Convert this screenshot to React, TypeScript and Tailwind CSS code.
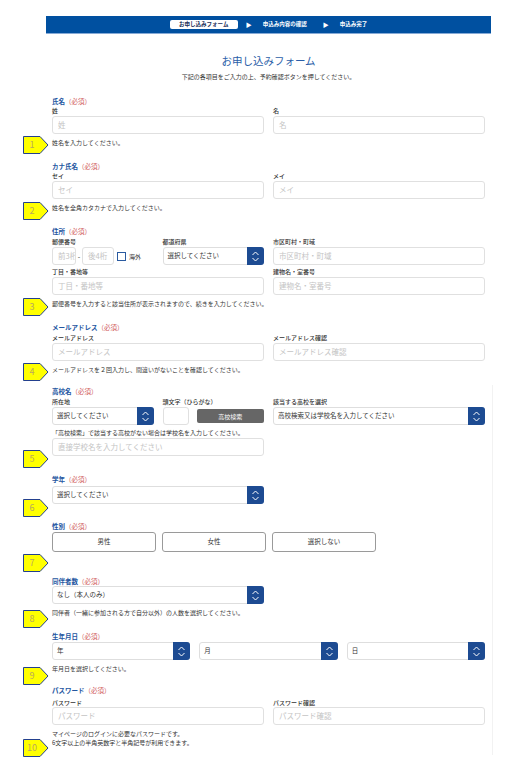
import React from 'react';

// 上下矢印のボタン付きセレクト
const SelectBox = ({ value, className = '' }: { value: string; className?: string }) => (
  <div className={`flex h-[18px] items-stretch rounded-[3px] border border-[#dedede] bg-white ${className}`}>
    <div className="flex flex-1 items-center whitespace-nowrap pl-[4px] text-[6.5px] text-[#333]">{value}</div>
    <div className="flex w-[17px] items-center justify-center rounded-r-[3px] bg-[#1d4b92] -m-px">
      <svg width="9" height="13" viewBox="0 0 9 13" fill="none" stroke="#fff" strokeWidth="1">
        <path d="M1.5 5 L4.5 2 L7.5 5" />
        <path d="M1.5 8 L4.5 11 L7.5 8" />
      </svg>
    </div>
  </div>
);

const TextBox = ({ placeholder, className = '' }: { placeholder: string; className?: string }) => (
  <div
    className={`flex h-[18px] items-center overflow-hidden whitespace-nowrap rounded-[3px] border border-[#e0e0e0] bg-white pl-[5px] text-[7.5px] text-[#c4c4c4] ${className}`}
  >
    {placeholder}
  </div>
);

const Sub = ({ children, className = '' }: { children: React.ReactNode; className?: string }) => (
  <div className={`h-[9px] whitespace-nowrap text-[6px] leading-[9px] font-medium text-[#333] ${className}`}>{children}</div>
);

const Help = ({ children, className = 'mt-[5px]' }: { children: React.ReactNode; className?: string }) => (
  <div className={`text-[6px] leading-[9px] text-[#333] ${className}`}>{children}</div>
);

const Badge = ({ n, className }: { n: number; className: string }) => (
  <div className={`absolute left-[-29px] h-[18px] w-[26px] ${className}`}>
    <svg width="26" height="18" viewBox="0 0 26 18" className="absolute inset-0">
      <polygon points="0.5,0.5 17,0.5 25,9 17,17.5 0.5,17.5" fill="#ffff00" stroke="#23408e" strokeWidth="1" />
    </svg>
    <div className="absolute left-0 top-0 flex h-[18px] w-[18px] items-center justify-center text-[9px] leading-[18px] text-[#b9a95e]">
      {n}
    </div>
  </div>
);

const Section = ({
  label,
  badge,
  badgeTop,
  className = '',
  children,
}: {
  label: string;
  badge: number;
  badgeTop: string;
  className?: string;
  children: React.ReactNode;
}) => (
  <div className={`relative ${className}`}>
    <div className="h-[10px] text-[6.5px] leading-[10px] font-bold text-[#24569f]">
      {label}
      <span className="font-normal text-[#d05a5a]">（必須）</span>
    </div>
    {children}
    <Badge n={badge} className={badgeTop} />
  </div>
);

export default function App() {
  return (
    <div className="min-h-screen w-full bg-white font-['Noto_Sans_CJK_JP','Noto_Sans',sans-serif]">
      <div className="relative ml-[46px] w-[445px] pt-[16px] pb-[20px]">
        {/* --- ステップバー --- */}
        <div className="flex h-[18px] items-center justify-center border-b border-[#86aad6] bg-[#0050a0]">
          <div className="flex h-[9px] w-[68px] items-center justify-center rounded-[2px] bg-white text-[5.5px] font-bold text-[#1b2f5a]">
            お申し込みフォーム
          </div>
          <span className="ml-[8px] text-[6px] text-white">▶</span>
          <span className="ml-[11px] text-[5.5px] font-bold text-white">申込み内容の確認</span>
          <span className="ml-[16px] text-[6px] text-white">▶</span>
          <span className="ml-[11px] text-[5.5px] font-bold text-white">申込み完了</span>
        </div>

        {/* --- タイトル --- */}
        <h1 className="mt-[20px] text-center text-[10.5px] leading-[14px] text-[#2b5ea8]">お申し込みフォーム</h1>
        <p className="mt-[5px] text-center text-[6px] leading-[8px] text-[#333]">
          下記の各項目をご入力の上、予約確認ボタンを押してください。
        </p>

        {/* うっすらした枠線 */}
        <div className="absolute left-[446px] top-[385px] h-[370px] w-px bg-[#f2f2f2]" />

        <div className="ml-[6px] mt-[15px] w-[433px]">
          {/* 1 氏名 */}
          <Section label="氏名" badge={1} badgeTop="top-[40px]">
            <div className="grid grid-cols-2 gap-x-[9px]">
              <div>
                <Sub>姓</Sub>
                <TextBox placeholder="姓" className="mt-px" />
              </div>
              <div>
                <Sub>名</Sub>
                <TextBox placeholder="名" className="mt-px" />
              </div>
            </div>
            <Help className="mt-[4px]">姓名を入力してください。</Help>
          </Section>

          {/* 2 カナ氏名 */}
          <Section label="カナ氏名" badge={2} badgeTop="top-[41px]" className="mt-[14px]">
            <div className="grid grid-cols-2 gap-x-[9px]">
              <div>
                <Sub>セイ</Sub>
                <TextBox placeholder="セイ" className="mt-px" />
              </div>
              <div>
                <Sub>メイ</Sub>
                <TextBox placeholder="メイ" className="mt-px" />
              </div>
            </div>
            <Help className="mt-[4px]">姓名を全角カタカナで入力してください。</Help>
          </Section>

          {/* 3 住所 */}
          <Section label="住所" badge={3} badgeTop="top-[72px]" className="mt-[14px]">
            <div className="mt-px grid grid-cols-2 gap-x-[9px]">
              <div className="grid grid-cols-2 gap-x-[9px]">
                <div>
                  <Sub>郵便番号</Sub>
                  <div className="mt-px flex items-center">
                    <TextBox placeholder="前3桁" className="w-[24px] pl-[2px] text-[6px]" />
                    <span className="w-[6px] text-center text-[7px] text-[#333]">-</span>
                    <TextBox placeholder="後4桁" className="w-[32px] pl-[3px] text-[6px]" />
                    <span className="ml-[3px] h-[9px] w-[9px] shrink-0 border-[1.5px] border-[#2a5aa0] bg-white" />
                    <span className="ml-[3px] whitespace-nowrap text-[6px] text-[#333]">海外</span>
                  </div>
                </div>
                <div>
                  <Sub>都道府県</Sub>
                  <SelectBox value="選択してください" className="mt-px" />
                </div>
              </div>
              <div>
                <Sub>市区町村・町域</Sub>
                <TextBox placeholder="市区町村・町域" className="mt-px" />
              </div>
            </div>
            <div className="mt-[2px] grid grid-cols-2 gap-x-[9px]">
              <div>
                <Sub>丁目・番地等</Sub>
                <TextBox placeholder="丁目・番地等" className="mt-px" />
              </div>
              <div>
                <Sub>建物名・室番号</Sub>
                <TextBox placeholder="建物名・室番号" className="mt-px" />
              </div>
            </div>
            <Help className="mt-[4px]">郵便番号を入力すると該当住所が表示されますので、続きを入力してください。</Help>
          </Section>

          {/* 4 メールアドレス */}
          <Section label="メールアドレス" badge={4} badgeTop="top-[41px]" className="mt-[14px]">
            <div className="mt-px grid grid-cols-2 gap-x-[9px]">
              <div>
                <Sub>メールアドレス</Sub>
                <TextBox placeholder="メールアドレス" className="mt-px" />
              </div>
              <div>
                <Sub>メールアドレス確認</Sub>
                <TextBox placeholder="メールアドレス確認" className="mt-px" />
              </div>
            </div>
            <Help className="mt-[4px]">メールアドレスを２回入力し、間違いがないことを確認してください。</Help>
          </Section>

          {/* 5 高校名 */}
          <Section label="高校名" badge={5} badgeTop="top-[64px]" className="mt-[12px]">
            <div className="mt-px grid grid-cols-2 gap-x-[9px]">
              <div className="grid grid-cols-2 gap-x-[9px]">
                <div>
                  <Sub>所在地</Sub>
                  <SelectBox value="選択してください" className="mt-px" />
                </div>
                <div>
                  <Sub>頭文字（ひらがな）</Sub>
                  <div className="mt-px flex items-center">
                    <TextBox placeholder="" className="w-[26px] shrink-0" />
                    <div className="ml-[8px] flex h-[14px] flex-1 items-center justify-center rounded-[2px] bg-[#666] text-[6px] text-white">
                      高校検索
                    </div>
                  </div>
                </div>
              </div>
              <div>
                <Sub>該当する高校を選択</Sub>
                <SelectBox value="高校検索又は学校名を入力してください" className="mt-px" />
              </div>
            </div>
            <Help className="mt-[3px]">「高校検索」で該当する高校がない場合は学校名を入力してください。</Help>
            <TextBox placeholder="直接学校名を入力してください" className="mt-px w-[212px]" />
          </Section>

          {/* 6 学年 */}
          <Section label="学年" badge={6} badgeTop="top-[25px]" className="mt-[18px]">
            <SelectBox value="選択してください" className="mt-[2px] w-[212px]" />
          </Section>

          {/* 7 性別 */}
          <Section label="性別" badge={7} badgeTop="top-[33px]" className="mt-[17px]">
            <div className="mt-px flex gap-[6px]">
              {['男性', '女性', '選択しない'].map((g) => (
                <div
                  key={g}
                  className="flex h-[20px] w-[104px] items-center justify-center rounded-[3px] border border-[#9a9a9a] text-[6.5px] text-[#333]"
                >
                  {g}
                </div>
              ))}
            </div>
          </Section>

          {/* 8 同伴者数 */}
          <Section label="同伴者数" badge={8} badgeTop="top-[34px]" className="mt-[24px]">
            <SelectBox value="なし（本人のみ）" className="w-[212px]" />
            <Help className="mt-[4px]">同伴者（一緒に参加される方で自分以外）の人数を選択してください。</Help>
          </Section>

          {/* 9 生年月日 */}
          <Section label="生年月日" badge={9} badgeTop="top-[36px]" className="mt-[14px]">
            <div className="mt-px grid grid-cols-3 gap-x-[9px]">
              <SelectBox value="年" />
              <SelectBox value="月" />
              <SelectBox value="日" />
            </div>
            <Help className="mt-[4px]">年月日を選択してください。</Help>
          </Section>

          {/* 10 パスワード */}
          <Section label="パスワード" badge={10} badgeTop="top-[54px]" className="mt-[12px]">
            <div className="mt-[3px] grid grid-cols-2 gap-x-[9px]">
              <div>
                <Sub>パスワード</Sub>
                <TextBox placeholder="パスワード" />
              </div>
              <div>
                <Sub>パスワード確認</Sub>
                <TextBox placeholder="パスワード確認" />
              </div>
            </div>
            <div className="mt-[4px] text-[6px] leading-[9px] text-[#333]">
              <div>マイページのログインに必要なパスワードです。</div>
              <div>6文字以上の半角英数字と半角記号が利用できます。</div>
            </div>
          </Section>
        </div>
      </div>
    </div>
  );
}
